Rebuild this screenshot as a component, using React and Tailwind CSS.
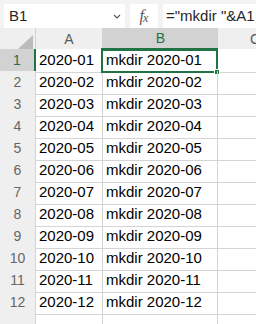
import React from "react";

const rows = Array.from({ length: 12 }, (_, i) => {
    const m = String(i + 1).padStart(2, "0");
    return { n: i + 1, a: `2020-${m}`, b: `mkdir 2020-${m}` };
});

function TopBar() {
    return (
        <div className="h-[33px] bg-[#f3f3f3] flex pt-1 pl-1 gap-[5px]">
            <div className="w-[121px] h-[24px] bg-white flex items-center justify-between pl-[5px] pr-[4px] text-[15px] text-[#262626]">
                <span>B1</span>
                <svg width="8" height="5" viewBox="0 0 8 5">
                    <path d="M1 1 L4 4 L7 1" fill="none" stroke="#555" strokeWidth="1.1" />
                </svg>
            </div>
            <div className="w-[28px] h-[24px] bg-white flex items-center justify-center text-[#555] text-[16px] italic font-['Liberation_Serif',serif]">
                <span>f</span><span className="text-[12px] -ml-[1px] mt-[3px]">x</span>
            </div>
            <div className="flex-1 h-[24px] bg-white flex items-center pl-[3px] text-[15px] text-[#262626] whitespace-nowrap">
                ="mkdir "&amp;A1
            </div>
        </div>
    );
}

function HeaderRow() {
    return (
        <div className="h-[21px] grid grid-cols-[36px_67px_115px_1fr] bg-[#efefef] text-[14px] text-[#5a5a5a]">
            <div className="border-r border-[#d4d4d4] flex items-end justify-end pr-[2px] pb-[2px]">
                <svg width="15" height="14" viewBox="0 0 15 14">
                    <path d="M15 0 L15 14 L0 14 Z" fill="#bcbcbc" />
                </svg>
            </div>
            <div className="border-r border-[#d4d4d4] flex items-center justify-center">A</div>
            <div className="bg-[#d2d2d2] border-b-2 border-[#217346] text-[#217346] flex items-center justify-center">B</div>
            <div className="flex items-center pl-[32px] whitespace-nowrap">C</div>
        </div>
    );
}

function Row({ r }) {
    const sel = r.n === 1;
    return (
        <div className="h-[22px] shrink-0 grid grid-cols-[36px_67px_115px_1fr] text-[15px] text-black">
            <div
                className={
                    sel
                        ? "bg-[#d2d2d2] border-r-2 border-[#217346] border-b border-b-[#d4d4d4] text-[#217346] text-[14px] flex items-center justify-center"
                        : "bg-[#efefef] border-r border-[#d4d4d4] border-b border-b-[#e0e0e0] text-[#666] text-[14px] flex items-center justify-center"
                }
            >
                {r.n}
            </div>
            <div className="border-r border-b border-[#d4d4d4] flex items-center pl-[3px]">{r.a}</div>
            <div className="relative border-r border-b border-[#d4d4d4] flex items-center pl-[3px]">
                {r.b}
                {sel && (
                    <div className="absolute -left-[2px] -top-px right-[-1px] bottom-[-1px] border-2 border-[#217346]">
                        <div className="absolute -right-[4px] -bottom-[4px] w-[6px] h-[6px] bg-[#217346] border border-white" />
                    </div>
                )}
            </div>
            <div className="border-b border-[#d4d4d4]" />
        </div>
    );
}

export default function App() {
    return (
        <div className="w-[256px] h-[324px] overflow-hidden bg-white flex flex-col font-['Liberation_Sans',Arial,sans-serif]">
            <TopBar />
            <HeaderRow />
            {rows.map((r) => (
                <Row key={r.n} r={r} />
            ))}
            <div className="h-[22px] shrink-0 grid grid-cols-[36px_67px_115px_1fr]">
                <div className="bg-[#efefef] border-r border-[#d4d4d4]" />
                <div className="border-r border-[#d4d4d4]" />
                <div className="border-r border-[#d4d4d4]" />
                <div />
            </div>
        </div>
    );
}
